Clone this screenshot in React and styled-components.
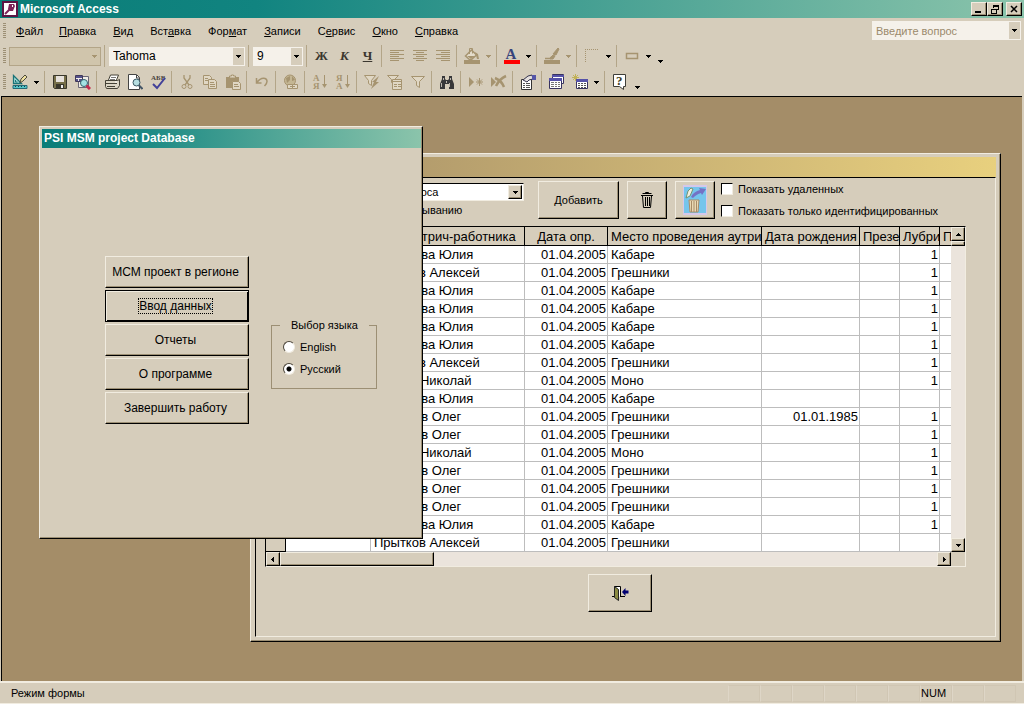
import React, { useState } from "react";
import styled, { createGlobalStyle, css } from "styled-components";

const face = "#d6cdbb";
const light = "#f1ece0";
const shadow = "#9c8f74";
const off = "#a69470";

const GlobalStyle = createGlobalStyle`
  * {
    box-sizing: border-box;
  }

  body {
    margin: 0;
    background: ${face};
    color: #000;
    font-family: "Liberation Sans", Arial, sans-serif;
    font-size: 11px;
  }

  button, input, select {
    margin: 0;
    font: inherit;
    color: inherit;
  }
`;

const raised = css`
  border: 1px solid;
  border-color: ${light} #000 #000 ${light};
  box-shadow: inset -1px -1px 0 ${shadow};
`;

const Page = styled.div`
  display: flex;
  flex-direction: column;
  height: 100vh;
  overflow: hidden;
`;

const TitleBar = styled.header`
  display: flex;
  align-items: center;
  gap: 2px;
  height: 18px;
  flex: none;
  padding: 0 2px;
  background: linear-gradient(90deg, #0a7d78, #118480 25%, #8bc4ab);
`;

const Title = styled.h1`
  flex: 1;
  margin: 0;
  color: #fff;
  font-size: 12px;
  line-height: 18px;
  font-weight: bold;
`;

const WindowButtons = styled.div`
  display: flex;
  gap: ${(props) => props.$gap || 0}px;
`;

const WindowButton = styled.button`
  ${raised}
  display: grid;
  place-items: center;
  width: 16px;
  height: 14px;
  padding: 0;
  background: ${face};
`;

const MenuBar = styled.nav`
  display: flex;
  align-items: center;
  height: 25px;
  flex: none;
  padding: 0 2px 0 3px;
`;

const Menu = styled.div`
  display: flex;
  flex: 1;
  gap: 16px;
  padding-left: 8px;
`;

const MenuItem = styled.button`
  padding: 0;
  border: 0;
  background: none;
  line-height: 16px;

  &:not(:first-child) {
    margin-right: 1px;
  }
`;

const Toolbar = styled.div`
  display: flex;
  align-items: center;
  height: 26px;
  flex: none;
  padding-left: 3px;
`;

const Grip = styled.i`
  width: 3px;
  height: 16px;
  margin-right: 2px;
  background: repeating-linear-gradient(${shadow} 0 1px, transparent 1px 2px);
`;

const Separator = styled.i`
  width: 6px;
  height: 22px;
  background: linear-gradient(#b3a588, #b3a588) 2px 0 / 1px 100% no-repeat;
`;

const Tool = styled.button`
  display: grid;
  place-items: center;
  width: 23px;
  height: 22px;
  padding: 0;
  border: 0;
  background: none;
`;

const DropTool = styled(Tool)`
  width: 11px;
`;

const MoreTool = styled(Tool)`
  width: 12px;
  place-items: end center;
  padding-bottom: 3px;
`;

const Letter = styled.span`
  color: #3b372f;
  font: bold 13px "Liberation Serif", serif;
  font-style: ${(props) => (props.$italic ? "italic" : "normal")};
  text-decoration: ${(props) => (props.$underline ? "underline" : "none")};
`;

const ComboBox = styled.div`
  position: relative;
  width: ${(props) => props.$width}px;
  height: 19px;
  margin: 0 1px;
  border: 1px solid ${(props) => (props.$disabled ? "#b3a588" : "#f5f1ea")};
  background: ${(props) => (props.$disabled ? "#d0c5ac" : "#f5f1ea")};

  select {
    width: 100%;
    height: 100%;
    padding: 0 16px 0 3px;
    border: 0;
    appearance: none;
    background: none;
    font-size: ${(props) => props.$size || 12}px;
    color: ${(props) => (props.$hint ? "#9b8a6c" : "#000")};
    opacity: 1;
  }
`;

const ComboArrow = styled.span`
  position: absolute;
  top: 0;
  right: 0;
  display: grid;
  place-items: center;
  width: 11px;
  height: 17px;
  background: ${(props) => (props.$disabled ? "none" : face)};
  pointer-events: none;
`;

const Desktop = styled.main`
  position: relative;
  flex: 1;
  overflow: hidden;
  margin: 1px 2px 0 1px;
  border-top: 1px solid #000;
  border-left: 1px solid #000;
  background: #a48d68;
`;

const Win = styled.section`
  position: absolute;
  left: ${(props) => props.$x}px;
  top: ${(props) => props.$y}px;
  width: ${(props) => props.$width}px;
  height: ${(props) => props.$height}px;
  display: flex;
  flex-direction: column;
  border: 1px solid;
  border-color: ${light} #000 #000 ${light};
  box-shadow: inset -1px -1px 0 ${shadow};
  background: ${face};
`;

const FormWindow = styled(Win)`
  padding: 3px 4px 4px 4px;
`;

const DialogWindow = styled(Win)`
  padding: 2px 1px 2px 2px;
`;

const FormTitle = styled.div`
  height: 20px;
  flex: none;
  background: linear-gradient(90deg, #a58e68, #e8d07e);
`;

const FormClient = styled.div`
  flex: 1;
  border: 1px solid;
  border-color: #000 ${light} ${light} #000;
`;

const FormHeader = styled.div`
  display: flex;
  align-items: flex-start;
  gap: 8px;
  height: 48px;
  padding: 3px 0 0 68px;
`;

const SortFields = styled.div`
  width: 206px;
  padding-top: 2px;
`;

const SortCombo = styled.div`
  position: relative;
  width: 200px;
  height: 18px;
  border: 1px solid;
  border-color: #000 ${light} ${light} #000;
  background: #fff;

  select {
    width: 100%;
    height: 100%;
    padding: 0 16px 0 36px;
    border: 0;
    appearance: none;
    background: none;
  }
`;

const SortArrow = styled.span`
  ${raised}
  position: absolute;
  top: 1px;
  right: 1px;
  display: grid;
  place-items: center;
  width: 14px;
  height: 14px;
  background: ${face};
  pointer-events: none;
`;

const Check = styled.label`
  display: flex;
  align-items: center;
  gap: 5px;
  height: 22px;
  line-height: 14px;

  input {
    width: 12px;
    height: 12px;
    appearance: none;
    border: 1px solid;
    border-color: #000 ${light} ${light} #000;
    background: #fff;
  }

  input:checked {
    box-shadow: inset 0 0 0 2px #fff;
    background: #000;
  }
`;

const SortOrder = styled(Check)`
  height: 18px;
  padding-left: 54px;
`;

const Checks = styled.div`
  margin: -3px 0 0 -2px;
`;

const PushButton = styled.button`
  ${raised}
  display: grid;
  place-items: center;
  width: ${(props) => props.$width}px;
  height: 38px;
  padding: 0;
  background: ${face};
`;

const DataGrid = styled.div`
  display: grid;
  grid-template-columns: 1fr 14px;
  margin: 0 29px 0 9px;
  border: 1px solid;
  border-color: #000 ${light} ${light} #000;
`;

const TableBox = styled.div`
  overflow: hidden;
  background: #fff;
`;

const Table = styled.table`
  width: 100%;
  table-layout: fixed;
  border-spacing: 0;
  font-size: 13px;
  line-height: 17px;

  th,
  td {
    height: 18px;
    padding: 0 2px 0 3px;
    overflow: hidden;
    white-space: nowrap;
    border-right: 1px solid #bdbdbd;
    border-bottom: 1px solid #bdbdbd;
    font-weight: normal;
    text-align: left;
  }

  thead th {
    height: 19px;
    padding: 0 3px;
    border-color: #000;
    background: ${face};
    text-align: center;
  }

  tbody th {
    border-color: #000;
    background: ${face};
  }

  th:last-child,
  td:last-child {
    border-right: 0;
  }
`;

const NumCell = styled.td`
  && {
    text-align: right;
    padding: 0 1px;
  }
`;

const VScroll = styled.div`
  display: flex;
  flex-direction: column;
  justify-content: space-between;
  background: #ebe4dc;
`;

const HScroll = styled.div`
  display: flex;
  height: 14px;
  background: #ebe4dc;
`;

const ScrollButton = styled.button`
  ${raised}
  display: grid;
  place-items: center;
  width: 14px;
  height: 14px;
  flex: none;
  padding: 0;
  background: ${face};
`;

const SplitBox = styled.div`
  ${raised}
  height: 5px;
  background: ${face};
`;

const Thumb = styled.div`
  ${raised}
  width: 154px;
  margin-right: auto;
  background: ${face};
`;

const FormFooter = styled.div`
  display: flex;
  justify-content: center;
  padding: 7px 11px 0 0;
`;

const DialogTitle = styled.div`
  height: 19px;
  flex: none;
  padding-left: 2px;
  color: #fff;
  font-size: 12px;
  line-height: 19px;
  font-weight: bold;
  background: linear-gradient(90deg, #0a7d78, #118480 20%, #8bc4ab);
`;

const DialogBody = styled.div`
  display: flex;
  align-items: flex-start;
  gap: 22px;
  padding: 108px 0 0 63px;
`;

const DialogMenu = styled.div`
  display: flex;
  flex-direction: column;
  gap: 2px;
  width: 144px;
`;

const DialogButton = styled.button`
  ${raised}
  height: 32px;
  padding: 0 3px 0 0;
  background: ${face};
  font-size: 12px;

  ${(props) =>
    props.$default &&
    css`
      border-color: #000;
      box-shadow: inset 1px 1px 0 ${light}, inset -1px -1px 0 #000;
    `}

  span {
    outline: ${(props) => (props.$default ? "1px dotted #000" : "none")};
  }
`;

const Language = styled.fieldset`
  width: 106px;
  height: 71px;
  margin: 62px 0 0;
  padding: 4px 0 0 11px;
  border: 1px solid ${shadow};

  legend {
    padding: 0 11px;
    margin-left: -3px;
    line-height: 14px;
  }
`;

const Radio = styled.label`
  display: flex;
  align-items: center;
  gap: 5px;
  height: 22px;

  input {
    width: 12px;
    height: 12px;
    appearance: none;
    border: 1px solid;
    border-color: #4a4439 ${light} ${light} #4a4439;
    border-radius: 50%;
    background: #fff;
  }

  input:checked {
    background: radial-gradient(circle, #000 2px, #fff 3px);
  }
`;

const StatusBar = styled.footer`
  display: flex;
  align-items: center;
  height: 23px;
  flex: none;
  padding: 0 8px 0 11px;
  border-top: 2px solid ${light};
  border-bottom: 1px solid ${light};
`;

const StatusText = styled.span`
  flex: 1;
`;

const StatusCell = styled.span`
  width: 32px;
  height: 17px;
  line-height: 15px;
  border: 1px solid #d0c6b3;
  border-left-color: #ded6c7;
`;

const Arrow = ({ dir = "down", color = "#000" }) => {
  const paths = {
    down: "M0 1h5v1h-1v1h-1v1h-1v-1h-1v-1h-1z",
    up: "M2 1h1v1h1v1h1v1h-5v-1h1v-1h1z",
    left: "M3 0v5h-1v-1h-1v-1h-1v-1h1v-1h1v-1z",
    right: "M1 0v5h1v-1h1v-1h1v-1h-1v-1h-1v-1z",
  };
  return (
    <svg width="5" height="5" shapeRendering="crispEdges" aria-hidden="true">
      <path d={paths[dir]} fill={color} />
    </svg>
  );
};

const Glyph = styled.text`
  font-family: "Liberation Serif", serif;
  font-weight: bold;
  font-size: ${(props) => props.$size}px;
`;

const drawings = {
  alignLeft: <path d="M1 2.5h14M1 4.5h9M1 6.5h14M1 8.5h9M1 10.5h14M1 12.5h9" stroke={off} />,
  alignCenter: <path d="M1 2.5h14M4 4.5h8M1 6.5h14M4 8.5h8M1 10.5h14M4 12.5h8" stroke={off} />,
  alignRight: <path d="M1 2.5h14M6 4.5h9M1 6.5h14M6 8.5h9M1 10.5h14M6 12.5h9" stroke={off} />,
  fill: (
    <>
      <path d="M0 12h16v4h-16z" fill={off} />
      <path d="M1.500 8l6-6 5 5-5 4.500h-2z" fill="#e4dccb" stroke={off} strokeWidth="1.500" />
      <path d="M5.500 6v-5.500h3v5" fill="none" stroke={off} />
      <path d="M3 8h8l-4 3zM11 4l3 2 1 5h-2l-1-4z" fill={off} />
    </>
  ),
  fontColor: (
    <>
      <path d="M0 12h16v4h-16z" fill="#f00" />
      <Glyph x="1.500" y="11" $size={15} fill="#38447c">
        А
      </Glyph>
    </>
  ),
  lineColor: (
    <>
      <path d="M0 12h16v4h-16z" fill={off} />
      <path d="M1 10.500h5l2-2" fill="none" stroke={off} strokeWidth="1.500" />
      <path d="M14 0l1 1-3 6-3-1zM9 7l2 1-2 3h-3l1-2z" fill={off} stroke={off} />
    </>
  ),
  border: <path d="M1.500 1v14M1 1.500h14" stroke={off} strokeDasharray="1 1" />,
  effect: <path d="M2.500 5.500h11v5h-11z" fill="none" stroke={off} strokeWidth="1.500" />,
  design: (
    <>
      <path d="M1.500 1.500v8h8z" fill="#a5dcd8" stroke="#1b7377" strokeWidth="1.300" />
      <path d="M3.500 6v2h2" fill="none" stroke="#1b7377" />
      <path d="M1 11.500h14v3h-14z" fill="#55c5c8" stroke="#246a78" />
      <path d="M3.500 12v1M6.500 12v1M9.500 12v1M12.500 12v1" stroke="#153d4a" />
      <path d="M8 9l1-4 4-4 2 2-4 4z" fill="#eee0a0" stroke="#4c493c" />
    </>
  ),
  save: (
    <>
      <path d="M1.500 1.500h13v13h-12l-1-1z" fill="#77704a" stroke="#39372c" />
      <path d="M4 2h8v6h-8z" fill="#e6e1dc" />
      <path d="M4 10h8v4h-8z" fill="#39372c" />
      <path d="M9 11h2v3h-2z" fill="#eee" />
    </>
  ),
  find: (
    <>
      <path d="M3.500 2.500h10v11h-10z" fill="#f1ede7" stroke="#6a6677" />
      <path d="M.500 1.500h7v6h-7z" fill="#f1ede7" stroke="#403859" />
      <path d="M1 2h6v2h-6zM1 5h2v2h-2zM4 5h3v2h-3z" fill="#55518a" />
      <circle cx="9" cy="9" r="3.500" fill="#a5e2e4" stroke="#34636e" />
      <path d="M11.500 11.500l3.500 3.500" stroke="#c42a4c" strokeWidth="3" />
    </>
  ),
  print: (
    <>
      <path d="M4.500 6l2-5h8l-2 5" fill="#fff" stroke="#444136" />
      <path d="M7 3.500h5M6 5.500h5" stroke="#777" />
      <path d="M1.500 6.500h12l2-1v6l-2 3h-11l-1-2z" fill="#dcd6c6" stroke="#444136" />
      <path d="M1 9.500h12M3 12.500h8" stroke="#444136" />
      <path d="M11 8h2" stroke="#fff" />
    </>
  ),
  preview: (
    <>
      <path d="M1.500 .500h8l3 3v12h-11z" fill="#fff" stroke="#444" />
      <path d="M9.500 1v3h3" fill="none" stroke="#444" />
      <circle cx="9.500" cy="8.500" r="3.500" fill="#b7dfe2" stroke="#3a5864" />
      <path d="M12 11.500l3.500 3.500" stroke="#456" strokeWidth="2" />
    </>
  ),
  spell: (
    <>
      <Glyph x="1" y="6" $size={7} fill="#49443e">
        АБВ
      </Glyph>
      <path d="M3 10l4 4 8-10" fill="none" stroke="#424099" strokeWidth="2" />
    </>
  ),
  cut: (
    <g fill="none" stroke={off}>
      <path d="M5 1v3l5 7M11 1v3l-5 7" strokeWidth="1.300" />
      <circle cx="5" cy="12.500" r="2" />
      <circle cx="11" cy="12.500" r="2" />
    </g>
  ),
  copy: (
    <g fill="#e0d7c4" stroke={off}>
      <path d="M1.500 1.500h6l2 2v7h-8z" />
      <path d="M6.500 5.500h6l2 2v7h-8z" />
      <path d="M3 4.500h3M3 6.500h3M8 8.500h4M8 10.500h5M8 12.500h5" />
    </g>
  ),
  paste: (
    <>
      <path d="M1 3h13v11h-13z" fill={off} />
      <path d="M4.500 4v-2h2v-1h2v1h2v2z" fill="#e0d7c4" stroke={off} />
      <path d="M7.500 7.500h6l2 2v6h-8z" fill="#e0d7c4" stroke={off} />
      <path d="M9 10.500h4M9 12.500h5" stroke={off} />
    </>
  ),
  undo: <path d="M2.500 4v5h5M3 8.500c4-6 10-5 10-1 0 2-1 3-2.500 4.500" fill="none" stroke={off} strokeWidth="1.500" />,
  link: (
    <>
      <circle cx="7" cy="6.500" r="5.500" fill="#c4b693" stroke={off} />
      <path d="M3 4l4-2v4l-3 3zM9 2l3 4-3 1z" fill={off} />
      <path d="M4.500 10.500h5v4h-5zM9.500 10.500h5v4h-5zM7 12.500h5" fill="#e0d7c4" stroke={off} />
    </>
  ),
  sortAsc: (
    <>
      <Glyph x="1" y="7" $size={9} fill={off}>
        А
      </Glyph>
      <Glyph x="1" y="15" $size={9} fill={off}>
        Я
      </Glyph>
      <path d="M12 1h1v9h2l-2.500 4-2.500-4h2z" fill={off} />
    </>
  ),
  sortDesc: (
    <>
      <Glyph x="1" y="7" $size={9} fill={off}>
        Я
      </Glyph>
      <Glyph x="1" y="15" $size={9} fill={off}>
        А
      </Glyph>
      <path d="M12 1h1v9h2l-2.500 4-2.500-4h2z" fill={off} />
    </>
  ),
  filterSel: (
    <>
      <path d="M.500 1.500h11l-4 5v5l-3-2v-3z" fill="#e0d7c4" stroke={off} />
      <path d="M15 2l-7 6h2l-3 7 8-7h-3z" fill={off} />
    </>
  ),
  filterForm: (
    <>
      <path d="M.500 1.500h11l-4 4v5l-3-2v-3z" fill="#e0d7c4" stroke={off} />
      <path d="M5.500 5.500h9v10h-9zM6 7.500h8M7 10.500h3M7 12.500h3M11 10.500h3M11 12.500h3" fill="#e0d7c4" stroke={off} />
    </>
  ),
  filter: <path d="M1.500 2.500h13l-5 5v6l-3-2v-4z" fill="#e0d7c4" stroke={off} />,
  binoculars: (
    <>
      <path d="M3 2h3v3l1 1h2l1-1v-3h3v3l2 5v5h-5v-5h-4v5h-5v-5l2-5z" fill="#38383a" />
      <path d="M4.500 4v2M11.500 4v2M2.500 9v4M10.500 9v4M7.500 7v2" stroke="#bcb7ae" />
    </>
  ),
  newRecord: (
    <>
      <path d="M1 3l5 5-5 5z" fill={off} />
      <path d="M11.500 4v8M8 8h7M9 5.500l5 5M14 5.500l-5 5" stroke={off} />
    </>
  ),
  deleteRecord: (
    <>
      <path d="M0 3l5 5-5 5z" fill={off} />
      <path d="M4 4c5 2 7 4 9 9M15 2c-5 2-8 6-10 10" fill="none" stroke={off} strokeWidth="2.500" />
    </>
  ),
  properties: (
    <>
      <path d="M1.500 5.500h10v10h-10z" fill="#fff" stroke="#333" />
      <path d="M3 9.500h2M6 9.500h4M3 11.500h2M6 11.500h4M3 13.500h2M6 13.500h4" stroke="#555" />
      <path d="M3 6l5-4 4-1 1 4-4 1-2 2z" fill="#e4dfdc" stroke="#343450" />
      <path d="M12 1h4v5h-4z" fill="#5656a8" />
    </>
  ),
  dbWindow: (
    <>
      <path d="M3.500 .500h11v9h-11z" fill="#fff" stroke="#38335f" />
      <path d="M3 1h12v2h-12z" fill="#5552a8" />
      <path d="M.500 4.500h12v10h-12z" fill="#fff" stroke="#38335f" />
      <path d="M0 4h13v3h-13z" fill="#5552a8" />
      <path d="M2 8.500h3M6 8.500h2M9 8.500h2M2 10.500h3M6 10.500h2M9 10.500h2M2 12.500h3M6 12.500h2M9 12.500h2" stroke="#777" />
    </>
  ),
  newObject: (
    <>
      <path d="M3.500 0v7M0 3.500h7M1 1l5 5M6 1l-5 5" stroke="#c2b257" />
      <path d="M4.500 5.500h11v9h-11z" fill="#fff" stroke="#38335f" />
      <path d="M4 5h12v3h-12z" fill="#5552a8" />
      <path d="M6 9.500h2M9 9.500h2M12 9.500h2M6 11.500h2M9 11.500h2M12 11.500h2M6 13.500h2M9 13.500h2M12 13.500h2" stroke="#555" />
    </>
  ),
  help: (
    <>
      <path d="M1.500 .500h12v12h-2v3l-4-3h-6z" fill="#fff" stroke="#3e3e38" />
      <Glyph x="4" y="11" $size={13} fill="#3e3b20">
        ?
      </Glyph>
    </>
  ),
};

const Icon = ({ name }) => (
  <svg width="16" height="16" viewBox="0 0 16 16" aria-hidden="true">
    {drawings[name]}
  </svg>
);

const AccessLogo = () => (
  <svg width="16" height="16" viewBox="0 0 16 16" aria-hidden="true">
    <path d="M0 0h16v16h-16z" fill="#5c1544" />
    <path d="M2 2h12v12h-12z" fill="#fff" />
    <path d="M7 3h5l1 2-2 5h-3l-2-2z" fill="#7e2459" />
    <path d="M10 4l1 1-1 1" fill="none" stroke="#fff" />
    <path d="M8 8l-5 5" stroke="#7e2459" strokeWidth="2" />
  </svg>
);

const TrashIcon = () => (
  <svg width="14" height="18" viewBox="0 0 14 18" aria-hidden="true">
    <path d="M5.500 2v-.500h3v1M2.500 2.500h9M1 4.500h12M2.500 5l1 11.500h7l1-11.500M5.500 6v9M7.500 6v9M9.500 6v9" fill="none" stroke="#000" />
  </svg>
);

const RestoreIcon = () => (
  <svg width="24" height="30" viewBox="0 0 24 30" aria-hidden="true">
    <path d="M0 0h24v30h-24z" fill="#d5c8ea" />
    <path d="M1 2h22v26h-22z" fill="#75c5ec" />
    <path d="M3 13l2-7 3-3 2 1-3 7z" fill="#f3eee0" stroke="#74946f" />
    <path d="M8 12c2-4 5-6 9-7l-1-2 7 1-4 6-1-2c-4 1-6 3-8 5z" fill="#7472c5" />
    <path d="M6 15h10l-1 12h-8z" fill="#ead9b4" stroke="#a88b66" />
    <path d="M8.500 16v11M11 16v11M13.500 16v11" stroke="#a88b66" />
  </svg>
);

const ExitIcon = () => (
  <svg width="17" height="16" viewBox="0 0 17 16" aria-hidden="true">
    <path d="M0 11.500h2M2.500 12v-10.500h6v10M8 11.500h5" fill="#fff" stroke="#000" />
    <path d="M2.500 1.500l4 3v11l-4-3z" fill="#8b8b42" stroke="#222" />
    <path d="M10 7l3.500-4v2.500h3v3h-3v2.500z" fill="#000071" />
  </svg>
);

const MenuLabel = ({ text, hot }) => (
  <>
    {text.slice(0, hot)}
    <u>{text[hot]}</u>
    {text.slice(hot + 1)}
  </>
);

const menus = [
  ["Файл", 0],
  ["Правка", 0],
  ["Вид", 0],
  ["Вставка", 3],
  ["Формат", 3],
  ["Записи", 0],
  ["Сервис", 1],
  ["Окно", 0],
  ["Справка", 0],
];

// "|" is a separator, "v" a drop-down arrow after the icon
const formatTools = [
  "|", "alignLeft", "alignCenter", "alignRight", "|", "fill", "v-off", "|", "fontColor", "v",
  "|", "lineColor", "v-off", "|", "border", "v", "|", "effect", "v",
];

const standardTools = [
  "design", "v", "|", "save", "find", "|", "print", "preview", "spell", "|", "cut", "copy", "paste",
  "|", "undo", "|", "link", "|", "sortAsc", "sortDesc", "|", "filterSel", "filterForm", "filter",
  "|", "binoculars", "|", "newRecord", "deleteRecord", "|", "properties", "|", "dbWindow",
  "newObject", "v", "|", "help",
];

const ToolList = ({ tools }) =>
  tools.map((tool, i) => {
    if (tool === "|") return <Separator key={i} />;
    if (tool[0] === "v") {
      return (
        <DropTool key={i} aria-label="Список">
          <Arrow color={tool === "v-off" ? off : "#000"} />
        </DropTool>
      );
    }
    return (
      <Tool key={i} aria-label={tool}>
        <Icon name={tool} />
      </Tool>
    );
  });

const Combo = ({ label, value, width, size, disabled, hint }) => (
  <ComboBox $width={width} $size={size} $disabled={disabled} $hint={hint}>
    <select aria-label={label} disabled={disabled}>
      <option>{value}</option>
    </select>
    <ComboArrow $disabled={disabled}>
      <Arrow color={disabled ? off : "#000"} />
    </ComboArrow>
  </ComboBox>
);

const columns = [20, 85, 154, 83, 154, 98, 40, 40, null];
const headings = ["", "Код", "Имя аутрич-работника", "Дата опр.", "Место проведения аутрича", "Дата рождения", "Презер", "Лубрик", "Пол"];

const yulia = "Смирнова Юлия";
const alexey = "Прытков Алексей";
const nikolay = "Козлов Николай";
const oleg = "Смирнов Олег";

const rows = [
  { name: yulia, place: "Кабаре", lube: 1 },
  { name: alexey, place: "Грешники", lube: 1 },
  { name: yulia, place: "Кабаре", lube: 1 },
  { name: yulia, place: "Кабаре", lube: 1 },
  { name: yulia, place: "Кабаре", lube: 1 },
  { name: yulia, place: "Кабаре", lube: 1 },
  { name: alexey, place: "Грешники", lube: 1 },
  { name: nikolay, place: "Моно", lube: 1 },
  { name: yulia, place: "Кабаре" },
  { name: oleg, place: "Грешники", born: "01.01.1985", lube: 1 },
  { name: oleg, place: "Грешники", lube: 1 },
  { name: nikolay, place: "Моно", lube: 1 },
  { name: oleg, place: "Грешники", lube: 1 },
  { name: oleg, place: "Грешники", lube: 1 },
  { name: oleg, place: "Грешники", lube: 1 },
  { name: yulia, place: "Кабаре", lube: 1 },
  { name: alexey, place: "Грешники" },
];

const SurveyTable = () => (
  <DataGrid>
    <TableBox>
      <Table>
        <colgroup>
          {columns.map((width, i) => (
            <col key={i} width={width || undefined} />
          ))}
        </colgroup>
        <thead>
          <tr>
            {headings.map((heading) => (
              <th key={heading}>{heading}</th>
            ))}
          </tr>
        </thead>
        <tbody>
          {rows.map((row, i) => (
            <tr key={i}>
              <th />
              <td />
              <td>{row.name}</td>
              <NumCell>01.04.2005</NumCell>
              <td>{row.place}</td>
              <NumCell>{row.born}</NumCell>
              <td />
              <NumCell>{row.lube}</NumCell>
              <td />
            </tr>
          ))}
        </tbody>
      </Table>
    </TableBox>
    <VScroll>
      <div>
        <ScrollButton aria-label="Вверх">
          <Arrow dir="up" />
        </ScrollButton>
        <SplitBox />
      </div>
      <ScrollButton aria-label="Вниз">
        <Arrow />
      </ScrollButton>
    </VScroll>
    <HScroll>
      <ScrollButton aria-label="Влево">
        <Arrow dir="left" />
      </ScrollButton>
      <Thumb />
      <ScrollButton aria-label="Вправо">
        <Arrow dir="right" />
      </ScrollButton>
    </HScroll>
  </DataGrid>
);

const SurveyForm = () => (
  <FormWindow $x={248} $y={56} $width={751} $height={489}>
    <FormTitle />
    <FormClient>
      <FormHeader>
        <SortFields>
          <SortCombo>
            <select aria-label="Сортировка">
              <option>по дате опроса</option>
            </select>
            <SortArrow>
              <Arrow />
            </SortArrow>
          </SortCombo>
          <SortOrder>
            <input type="checkbox" />
            по убыванию
          </SortOrder>
        </SortFields>
        <PushButton $width={81}>Добавить</PushButton>
        <PushButton $width={40} aria-label="Удалить">
          <TrashIcon />
        </PushButton>
        <PushButton $width={40} aria-label="Восстановить">
          <RestoreIcon />
        </PushButton>
        <Checks>
          <Check>
            <input type="checkbox" />
            Показать удаленных
          </Check>
          <Check>
            <input type="checkbox" />
            Показать только идентифицированных
          </Check>
        </Checks>
      </FormHeader>
      <SurveyTable />
      <FormFooter>
        <PushButton $width={64} aria-label="Выход">
          <ExitIcon />
        </PushButton>
      </FormFooter>
    </FormClient>
  </FormWindow>
);

const MainDialog = () => {
  const [language, setLanguage] = useState("Русский");

  return (
    <DialogWindow $x={37} $y={29} $width={384} $height={413}>
      <DialogTitle>PSI MSM project Database</DialogTitle>
      <DialogBody>
        <DialogMenu>
          <DialogButton>МСМ проект в регионе</DialogButton>
          <DialogButton $default>
            <span>Ввод данных</span>
          </DialogButton>
          <DialogButton>Отчеты</DialogButton>
          <DialogButton>О программе</DialogButton>
          <DialogButton>Завершить работу</DialogButton>
        </DialogMenu>
        <Language>
          <legend>Выбор языка</legend>
          {["English", "Русский"].map((name) => (
            <Radio key={name}>
              <input
                type="radio"
                name="language"
                checked={language === name}
                onChange={() => setLanguage(name)}
              />
              {name}
            </Radio>
          ))}
        </Language>
      </DialogBody>
    </DialogWindow>
  );
};

const App = () => (
  <>
    <GlobalStyle />
    <Page>
      <TitleBar>
        <AccessLogo />
        <Title>Microsoft Access</Title>
        <WindowButtons $gap={3}>
          <WindowButtons>
            <WindowButton aria-label="Свернуть">
              <svg width="10" height="8" shapeRendering="crispEdges">
                <path d="M1 6h6v2h-6z" />
              </svg>
            </WindowButton>
            <WindowButton aria-label="Восстановить">
              <svg width="10" height="9" shapeRendering="crispEdges">
                <path d="M3.500 3v-2.500h5v4h-2M3 1h6M1.500 4.500h5v4h-5zM1 4h6" fill="none" stroke="#000" />
              </svg>
            </WindowButton>
          </WindowButtons>
          <WindowButton aria-label="Закрыть">
            <svg width="8" height="8">
              <path d="M1 1l6 6M7 1l-6 6" stroke="#000" strokeWidth="1.500" />
            </svg>
          </WindowButton>
        </WindowButtons>
      </TitleBar>
      <MenuBar>
        <Grip />
        <Menu>
          {menus.map(([text, hot]) => (
            <MenuItem key={text}>
              <MenuLabel text={text} hot={hot} />
            </MenuItem>
          ))}
        </Menu>
        <Combo label="Вопрос" value="Введите вопрос" width={149} size={11} hint />
      </MenuBar>
      <Toolbar>
        <Grip />
        <Combo label="Объект" value="" width={92} disabled />
        <Separator />
        <Combo label="Шрифт" value="Tahoma" width={136} />
        <Separator />
        <Combo label="Размер" value="9" width={50} />
        <Separator />
        <Tool>
          <Letter>Ж</Letter>
        </Tool>
        <Tool>
          <Letter $italic>К</Letter>
        </Tool>
        <Tool>
          <Letter $underline>Ч</Letter>
        </Tool>
        <ToolList tools={formatTools} />
        <MoreTool aria-label="Другие кнопки">
          <Arrow />
        </MoreTool>
      </Toolbar>
      <Toolbar>
        <Grip />
        <ToolList tools={standardTools} />
        <MoreTool aria-label="Другие кнопки">
          <Arrow />
        </MoreTool>
      </Toolbar>
      <Desktop>
        <SurveyForm />
        <MainDialog />
      </Desktop>
      <StatusBar>
        <StatusText>Режим формы</StatusText>
        {[0, 1, 2, 3, 4, 5, 6, 7, 8].map((n) => (
          <StatusCell key={n}>{n === 6 && "NUM"}</StatusCell>
        ))}
      </StatusBar>
    </Page>
  </>
);

export default App;
